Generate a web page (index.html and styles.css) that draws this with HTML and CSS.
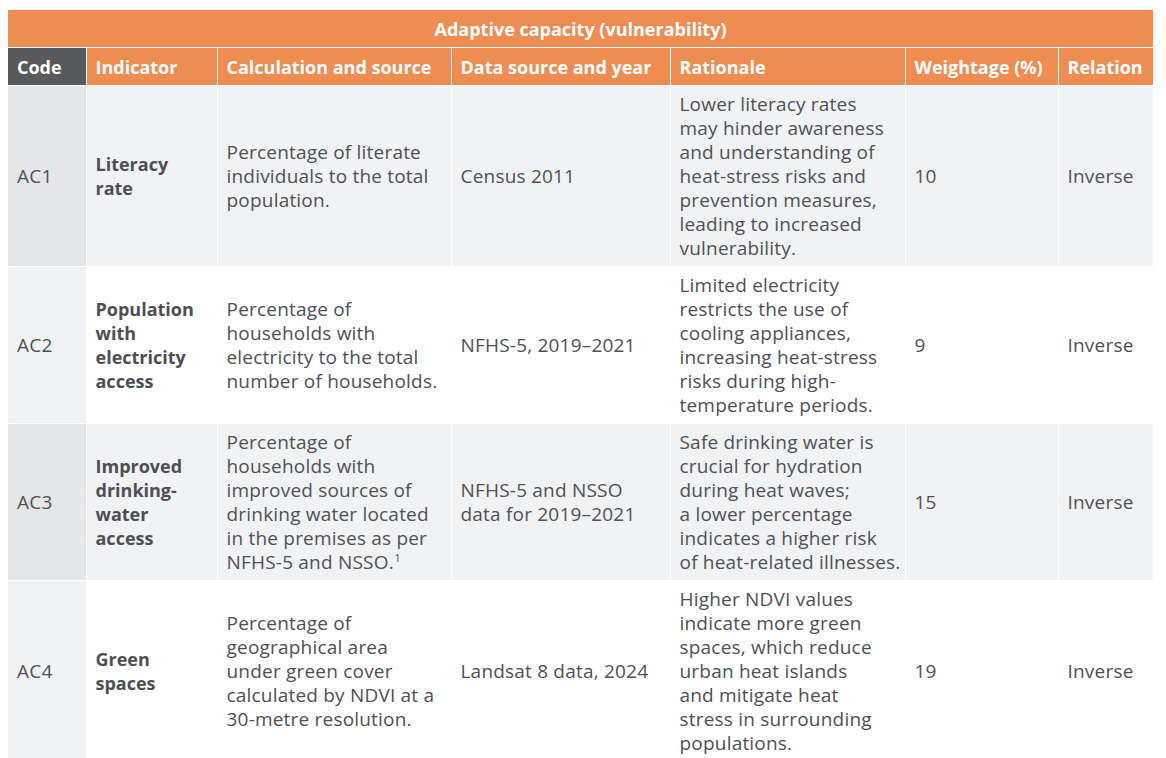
FILE: index.html
```html
<!DOCTYPE html>
<html lang="en">
<head>
<meta charset="utf-8">
<title>Adaptive capacity (vulnerability)</title>
<link rel="stylesheet" href="styles.css">
</head>
<body>
<table class="ac-table">
  <colgroup>
    <col class="c-code">
    <col class="c-ind">
    <col class="c-calc">
    <col class="c-data">
    <col class="c-rat">
    <col class="c-wt">
    <col class="c-rel">
  </colgroup>
  <thead>
    <tr class="title-row"><th colspan="7">Adaptive capacity (vulnerability)</th></tr>
    <tr class="head-row">
      <th class="code-head">Code</th>
      <th>Indicator</th>
      <th>Calculation and source</th>
      <th>Data source and year</th>
      <th>Rationale</th>
      <th>Weightage (%)</th>
      <th>Relation</th>
    </tr>
  </thead>
  <tbody>
    <tr class="shaded">
      <td class="code">AC1</td>
      <td class="ind">Literacy<br>rate</td>
      <td>Percentage of literate<br>individuals to the total<br>population.</td>
      <td>Census 2011</td>
      <td>Lower literacy rates<br>may hinder awareness<br>and understanding of<br>heat-stress risks and<br>prevention measures,<br>leading to increased<br>vulnerability.</td>
      <td>10</td>
      <td>Inverse</td>
    </tr>
    <tr>
      <td class="code">AC2</td>
      <td class="ind">Population<br>with<br>electricity<br>access</td>
      <td>Percentage of<br>households with<br>electricity to the total<br>number of households.</td>
      <td>NFHS-5, 2019–2021</td>
      <td>Limited electricity<br>restricts the use of<br>cooling appliances,<br>increasing heat-stress<br>risks during high-<br>temperature periods.</td>
      <td>9</td>
      <td>Inverse</td>
    </tr>
    <tr class="shaded">
      <td class="code">AC3</td>
      <td class="ind">Improved<br>drinking-<br>water<br>access</td>
      <td>Percentage of<br>households with<br>improved sources of<br>drinking water located<br>in the premises as per<br>NFHS-5 and NSSO.<sup>1</sup></td>
      <td>NFHS-5 and NSSO<br>data for 2019–2021</td>
      <td>Safe drinking water is<br>crucial for hydration<br>during heat waves;<br>a lower percentage<br>indicates a higher risk<br>of heat-related illnesses.</td>
      <td>15</td>
      <td>Inverse</td>
    </tr>
    <tr>
      <td class="code">AC4</td>
      <td class="ind">Green<br>spaces</td>
      <td>Percentage of<br>geographical area<br>under green cover<br>calculated by NDVI at a<br>30-metre resolution.</td>
      <td>Landsat 8 data, 2024</td>
      <td>Higher NDVI values<br>indicate more green<br>spaces, which reduce<br>urban heat islands<br>and mitigate heat<br>stress in surrounding<br>populations.</td>
      <td>19</td>
      <td>Inverse</td>
    </tr>
  </tbody>
</table>
</body>
</html>
```
FILE: styles.css
```css
body {
  margin: 0;
  padding: 10px 8px;
  background: #ffffff;
  font-family: "Open Sans", "Noto Sans", sans-serif;
}

.ac-table {
  width: 1145px;
  table-layout: fixed;
  border-collapse: collapse;
  background: #ffffff;
}

.c-code { width: 78px; }
.c-ind { width: 131px; }
.c-calc { width: 234px; }
.c-data { width: 219px; }
.c-rat { width: 235px; }
.c-wt { width: 153px; }
.c-rel { width: 95px; }

.ac-table th,
.ac-table td {
  border: 1px solid #ffffff;
  text-align: left;
  vertical-align: middle;
}

.ac-table tr:first-child th { border-top: 0; }
.ac-table th:first-child,
.ac-table td:first-child { border-left: 0; }
.ac-table th:last-child,
.ac-table td:last-child { border-right: 0; }

.title-row th {
  height: 37px;
  padding: 0;
  text-align: center;
  background: #ef8c52;
  color: #ffffff;
  font-size: 18px;
  font-weight: 700;
  line-height: 24px;
}

.head-row th {
  height: 37px;
  padding: 0 9px;
  background: #ef8c52;
  color: #ffffff;
  font-size: 18px;
  font-weight: 700;
  line-height: 24px;
  white-space: nowrap;
}

.head-row th.code-head {
  background: #58595b;
}

.ac-table td {
  padding: 6px 9px;
  font-size: 19px;
  letter-spacing: 0.2px;
  line-height: 24px;
  color: #4f5155;
  background: #ffffff;
  white-space: nowrap;
}

.ac-table tr.shaded td {
  background: #f1f2f4;
}

.ac-table td.code {
  background: #f1f2f4;
}

.ac-table tr.shaded td.code {
  background: #e5e6e8;
}

.ac-table td.ind {
  font-size: 18px;
  letter-spacing: 0;
  font-weight: 700;
  color: #4d4f53;
}

.ac-table sup {
  font-size: 10px;
  line-height: 0;
  margin-left: 1px;
  vertical-align: 7px;
}
```
